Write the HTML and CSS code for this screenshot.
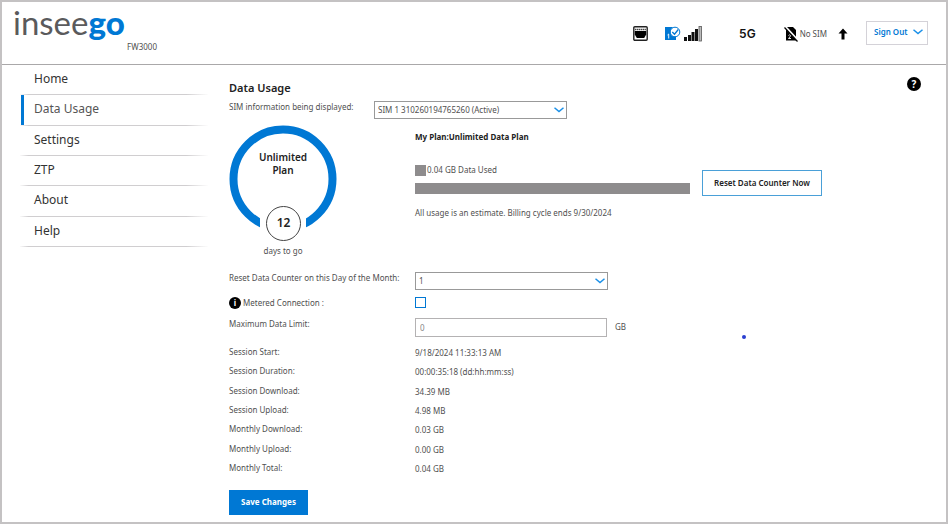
FILE: index.html
```
<!DOCTYPE html>
<html lang="en">
<head>
<meta charset="UTF-8">
<title>Data Usage - FW3000</title>
<link rel="stylesheet" href="styles.css">
</head>

<body>
<div class="page">

<header class="top">
  <div class="brand">
    <a class="logo" href="#">insee<b>go</b></a>
    <span class="model">FW3000</span>
  </div>
  <div class="status">
    <svg class="eth" width="15" height="16" viewBox="0 0 15 16">
      <rect x="0.8" y="0.8" width="13.4" height="13.4" rx="1" fill="#fff" stroke="#222" stroke-width="1.4"/>
      <path d="M1.800 5h11.400v3.500l-2 3.500H3.800l-2-3.500z" fill="#000"/>
      <path d="M2 3.500h11" stroke="#444" stroke-width="1.600" stroke-dasharray="1.400 0.500"/>
    </svg>
    <svg class="sim" width="16" height="15" viewBox="0 0 16 15">
      <path d="M0 1h7l4 3v10H0z" fill="#0078d4"/>
      <circle cx="10" cy="6" r="4.800" fill="#fff" stroke="#0078d4"/>
      <path d="M7.300 6l2.200 2.200 3.800-4.700" fill="none" stroke="#0078d4" stroke-width="1.300"/>
      <path d="M2.500 9l1.200-1v4.500" fill="none" stroke="#fff" stroke-width="0.900"/>
    </svg>
    <svg class="signal" width="18" height="16" viewBox="0 0 18 16">
      <path d="M0 11h3v4H0zM4 9h3v6H4zM7.500 6h3v9h-3zM11 3h3v12h-3z" fill="#111"/>
      <rect x="15" y="0.500" width="2.400" height="14.500" fill="#bbb" stroke="#555" stroke-width="0.800"/>
    </svg>
    <b class="net">5G</b>
    <svg class="nosim" width="15" height="16" viewBox="0 0 15 16">
      <path d="M2 1h7l3 3v10.500H2z" fill="#000"/>
      <path d="M4.500 9.500q1.500-1.500 2 0 0 1-2 3h2.500" fill="none" stroke="#fff" stroke-width="0.900"/>
      <path d="M1.500 1L14 14.500" stroke="#fff" stroke-width="2.400"/>
      <path d="M0.500 1.500L13.500 15.500" stroke="#000" stroke-width="1.200"/>
    </svg>
    <span class="nosim-text">No SIM</span>
    <svg class="up" width="10" height="12" viewBox="0 0 10 12">
      <path d="M5 0.500L9.500 5.500H6.500V11.500H3.500V5.500H0.500z" fill="#000"/>
    </svg>
    <button class="signout" type="button">Sign Out
      <svg width="10" height="6" viewBox="0 0 10 6"><path d="M0.500 0.800L5 4.600L9.500 0.800" fill="none" stroke="#1a90e8" stroke-width="1.500"/></svg>
    </button>
  </div>
</header>

<div class="main">

<nav class="menu">
  <a href="#">Home</a>
  <a href="#" class="active">Data Usage</a>
  <a href="#">Settings</a>
  <a href="#">ZTP</a>
  <a href="#">About</a>
  <a href="#">Help</a>
</nav>

<form class="content">
  <div class="title">
    <h1>Data Usage</h1>
    <a class="help" href="#" aria-label="Help">?</a>
  </div>

  <div class="simrow">
    <label for="sim">SIM information being displayed:</label>
    <span class="select">
      <select id="sim"><option>SIM 1 310260194765260 (Active)</option></select>
      <svg width="10" height="6" viewBox="0 0 10 6"><path d="M0.500 0.800L5 4.600L9.500 0.800" fill="none" stroke="#1a90e8" stroke-width="1.500"/></svg>
    </span>
  </div>

  <div class="plan">
    <div class="cycle">
      <div class="ring">
        <svg width="108" height="108" viewBox="0 0 108 108">
          <circle cx="54" cy="54" r="49.500" fill="none" stroke="#0078d4" stroke-width="8"/>
          <path d="M31 85h46v23H31z" fill="#fff"/>
        </svg>
        <b class="ring-text">Unlimited<br>Plan</b>
        <b class="days">12</b>
      </div>
      <span class="togo">days to go</span>
    </div>
    <div class="usage">
      <b>My Plan:Unlimited Data Plan</b>
      <span class="legend"><i></i>0.04 GB Data Used</span>
      <div class="bar"></div>
      <span>All usage is an estimate. Billing cycle ends 9/30/2024</span>
    </div>
    <button class="reset" type="button">Reset Data Counter Now</button>
  </div>

  <div class="settings">
    <label for="day">Reset Data Counter on this Day of the Month:</label>
    <span class="select">
      <select id="day"><option>1</option></select>
      <svg width="10" height="6" viewBox="0 0 10 6"><path d="M0.500 0.800L5 4.600L9.500 0.800" fill="none" stroke="#1a90e8" stroke-width="1.500"/></svg>
    </span>
    <label for="metered"><span class="info">i</span>Metered Connection :</label>
    <input type="checkbox" id="metered">
    <label for="limit">Maximum Data Limit:</label>
    <span class="limit"><input type="text" id="limit" value="0">GB</span>
  </div>

  <table class="totals">
    <tr><th>Session Start:</th><td>9/18/2024 11:33:13 AM</td></tr>
    <tr><th>Session Duration:</th><td>00:00:35:18 (dd:hh:mm:ss)</td></tr>
    <tr><th>Session Download:</th><td>34.39 MB</td></tr>
    <tr><th>Session Upload:</th><td>4.98 MB</td></tr>
    <tr><th>Monthly Download:</th><td>0.03 GB</td></tr>
    <tr><th>Monthly Upload:</th><td>0.00 GB</td></tr>
    <tr><th>Monthly Total:</th><td>0.04 GB</td></tr>
  </table>

  <button class="save" type="submit">Save Changes</button>
</form>

</div>
<span class="marker"></span>
</div>
</body>
</html>
```
FILE: styles.css
```
* { box-sizing: border-box; }

body { margin: 0; background: #fff; color: #505050;
       font: 8px/12px "Noto Sans", sans-serif; }
button, input, select { font: inherit; color: inherit; margin: 0; border-radius: 0; }
a { color: inherit; text-decoration: none; }
svg { display: block; flex: none; }

.page { position: relative; min-height: 100vh; border: 2px solid #c4c2c3; }

/* header */
.top { display: flex; justify-content: space-between; height: 63px;
       padding-right: 18px; border-bottom: 1px solid #aaa8a9; }
.brand { display: flex; flex-direction: column; width: 155px; padding-left: 11px; }
.logo { font: 400 33px/40px Lato, sans-serif; color: #5a5a5c; }
.logo b { font-weight: 900; color: #0078d4; }
.model { align-self: flex-end; line-height: 10px; }
.status { display: flex; align-items: center; height: 63px; }
.sim { margin-left: 17px; }
.signal { margin-left: 3px; }
.net { margin-left: 37px; font: 600 12px/16px Inter, sans-serif; color: #111; }
.nosim { margin-left: 28px; }
.nosim-text { margin-left: 1px; }
.up { margin: 0 18px 0 11px; }
.signout { display: flex; align-items: center; justify-content: space-between;
           width: 62px; height: 24px; margin-bottom: 2px; padding: 0 4px 2px 7px;
           border: 1px solid #d4d2d8; background: #fff;
           color: #0078d4; font-weight: 600; }

.main { display: flex; align-items: flex-start; }

/* side menu */
.menu { display: grid; grid-auto-rows: 1fr; width: 188px; height: 182px;
        margin-left: 18px; flex: none; }
.menu a { padding-left: 14px;
          border-bottom: 1px solid; border-image: linear-gradient(to right, #fff, #d0ced0 5%, #d0ced0 88%, #fff) 1;
          font-size: 12px; line-height: 28px; color: #333; }
.menu a.active { background: linear-gradient(#0078d4, #0078d4) 1px 0 / 3px 100% no-repeat; color: #555; }

/* content */
.content { flex: 1; padding: 12px 25px 0 21px; }
.title { display: flex; justify-content: space-between; align-items: flex-start; height: 24px; }
.title h1 { margin: 4px 0 0; font-size: 11px; line-height: 14px; font-weight: 600; color: #222; }
.help { width: 14px; height: 14px; border-radius: 50%; background: #000; color: #fff;
        font-weight: bold; font-size: 10px; line-height: 14px; text-align: center; }

.simrow { display: flex; align-items: flex-start; }
.simrow label { width: 145px; }

.select { display: grid; align-items: center; width: 193px; height: 18px; }
.select select, .select svg { grid-area: 1 / 1; }
.select select { width: 100%; height: 18px; padding: 0 3px; appearance: none;
                 border: 1px solid #999; background: #fff; }
.select svg { justify-self: end; margin-right: 3px; pointer-events: none; }

.plan { display: flex; margin-top: 6px; }
.cycle { width: 108px; text-align: center; }
.ring { position: relative; height: 116px; }
.ring-text { position: absolute; top: 26px; left: 0; width: 100%;
             font-size: 10px; line-height: 13px; font-weight: 600; color: #222; }
.days { position: absolute; left: 37px; top: 81px; width: 35px; height: 35px;
        border: 1px solid #444; border-radius: 50%; background: #fff;
        font-size: 12px; line-height: 32px; font-weight: 600; color: #222; }
.togo { display: block; margin-top: 4px; }
.usage { display: flex; flex-direction: column; width: 275px; margin: 6px 12px 0 78px; }
.usage b { color: #222; }
.legend { display: flex; align-items: center; margin: 21px 0 7px; }
.legend i { width: 11px; height: 11px; margin-right: 1px; background: #8e8c8d; }
.bar { height: 11px; margin-bottom: 13px; background: #8e8c8d; }
.reset { width: 120px; height: 26px; margin-top: 45px; padding: 0;
         border: 1px solid #4aa0d8; background: #fff; color: #222; font-weight: 600; }

.settings { display: grid; grid-template-columns: 186px auto; grid-template-rows: 18px 14px 18px;
            row-gap: 7px; margin-top: 15px; }
.settings label { display: flex; align-items: center; height: 12px; }
.info { width: 12px; height: 12px; margin-right: 2px; border-radius: 50%; background: #000; color: #fff;
        font-weight: bold; text-align: center; }
.settings input[type=checkbox] { appearance: none; width: 11px; height: 11px;
        border: 1px solid #0078d4; background: #fff; }
.limit { display: flex; align-items: center; gap: 8px; }
.limit input { width: 192px; height: 19px; padding: 0 4px; border: 1px solid #b4b2b3; color: #888; }

.totals { height: 136px; margin-top: 6px; border-collapse: collapse; }
.totals th, .totals td { padding: 0; text-align: left; font-weight: normal; }
.totals th { width: 186px; }
.totals td { padding-top: 2px; }

.save { display: block; width: 79px; height: 25px; margin-top: 12px; padding: 0 0 2px;
        border: 0; background: #0078d4; color: #fff; font-weight: bold; }

/* pointer dot */
.marker { position: absolute; left: 740px; top: 333px; width: 4px; height: 4px;
          border-radius: 50%; background: #2b3fd0; }
```
